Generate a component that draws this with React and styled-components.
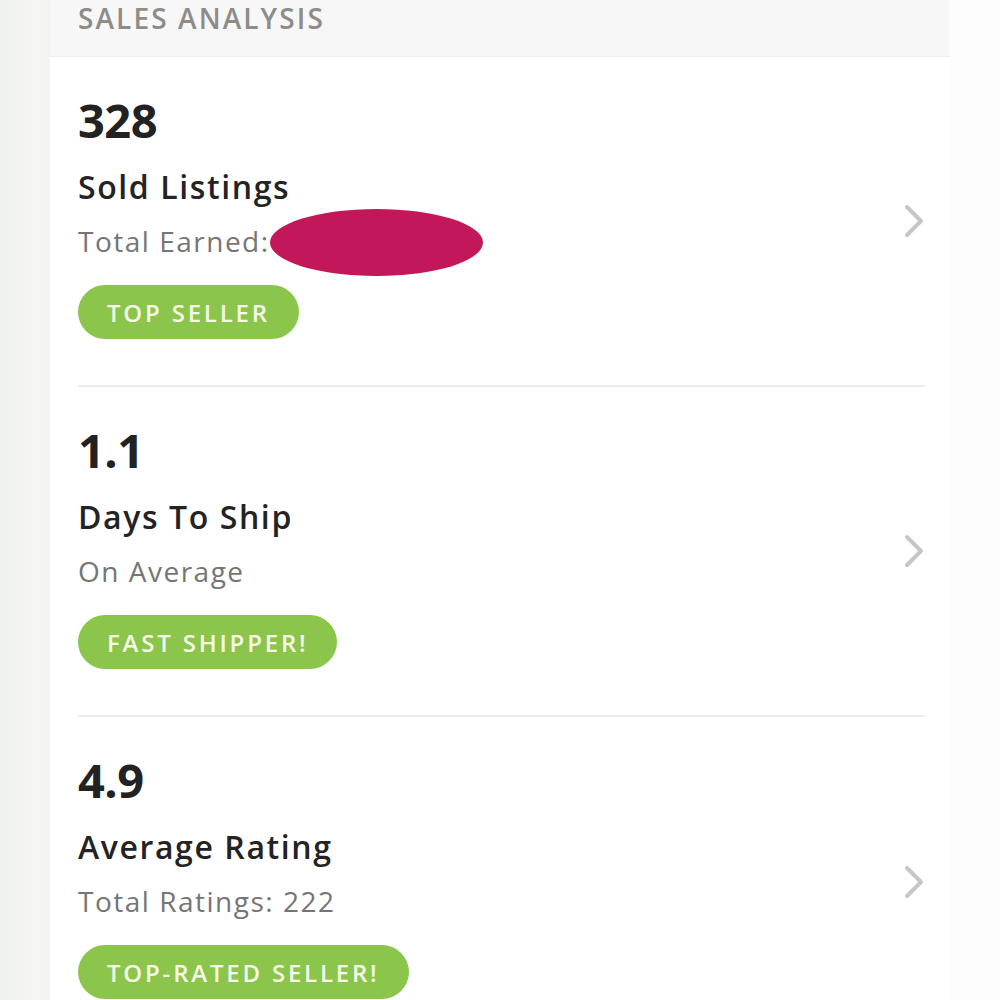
import React from 'react';
import styled, { createGlobalStyle } from 'styled-components';

const GlobalStyle = createGlobalStyle`
  html, body {
    margin: 0;
    padding: 0;
    background: #fdfdfd;
  }
  body {
    font-family: 'Open Sans', 'Noto Sans', 'Liberation Sans', sans-serif;
  }
`;

const stats = [
  {
    value: '328',
    title: 'Sold Listings',
    subtitle: 'Total Earned:',
    redacted: true,
    badge: 'TOP SELLER'
  },
  {
    value: '1.1',
    title: 'Days To Ship',
    subtitle: 'On Average',
    badge: 'FAST SHIPPER!'
  },
  {
    value: '4.9',
    title: 'Average Rating',
    subtitle: 'Total Ratings: 222',
    badge: 'TOP-RATED SELLER!'
  }
];

function Chevron() {
  return (
    <svg width="26" height="34" viewBox="0 0 26 34" fill="none">
      <path
        d="M8 3 L22 17 L8 31"
        stroke="#c6c6c6"
        strokeWidth="4"
        strokeLinecap="round"
        strokeLinejoin="round"
      />
    </svg>
  );
}

export default function App() {
  return (
    <Page>
      <GlobalStyle />
      <LeftGutter />
      <Main>
        <Header>SALES ANALYSIS</Header>
        <List>
          {stats.map((stat, i) => (
            <StatRow key={stat.title} last={i === stats.length - 1}>
              <StatBody>
                <Value>{stat.value}</Value>
                <Title>{stat.title}</Title>
                <Subtitle>
                  {stat.subtitle}
                  {stat.redacted && <Redaction />}
                </Subtitle>
                <Badge>{stat.badge}</Badge>
              </StatBody>
              <ChevronBox>
                <Chevron />
              </ChevronBox>
            </StatRow>
          ))}
        </List>
      </Main>
      <RightGutter />
    </Page>
  );
}

const Page = styled.div`
  display: flex;
  width: 1000px;
  height: 1000px;
  overflow: hidden;
  background: #ffffff;
`;

const LeftGutter = styled.div`
  flex: 0 0 50px;
  background: linear-gradient(to right, #f0f2ee, #f5f6f4 70%, #f3f4f2);
`;

const RightGutter = styled.div`
  flex: 0 0 50px;
  background: #fdfdfd;
`;

const Main = styled.div`
  flex: 0 0 900px;
  display: flex;
  flex-direction: column;
  background: #ffffff;
`;

const Header = styled.div`
  flex: 0 0 57px;
  box-sizing: border-box;
  padding: 0 0 0 28px;
  background: #f8f7f7;
  border-bottom: 1px solid #f1f0f0;
  color: #8e8c88;
  font-size: 28px;
  font-weight: 600;
  letter-spacing: 2.1px;
  line-height: 36px;
`;

const List = styled.div`
  display: flex;
  flex-direction: column;
  padding: 0 25px 0 28px;
`;

const StatRow = styled.div`
  flex: 0 0 330px;
  display: flex;
  box-sizing: border-box;
  padding-top: 38px;
  border-bottom: ${props => (props.last ? 'none' : '2px solid #ececec')};
`;

const StatBody = styled.div`
  flex: 1 1 auto;
  display: flex;
  flex-direction: column;
  align-items: flex-start;
`;

const Value = styled.div`
  font-size: 47px;
  font-weight: 700;
  color: #222222;
  line-height: 50px;
  letter-spacing: -0.5px;
`;

const Title = styled.div`
  margin-top: 23px;
  font-size: 32px;
  font-weight: 600;
  color: #232323;
  line-height: 38px;
  letter-spacing: 1.6px;
`;

const Subtitle = styled.div`
  margin-top: 18px;
  font-size: 28px;
  color: #757575;
  line-height: 34px;
  letter-spacing: 1.5px;
  display: flex;
  align-items: center;
`;

const Redaction = styled.span`
  display: inline-block;
  width: 213px;
  height: 67px;
  margin: -15px 0 -18px 0;
  border-radius: 50%;
  background: #c2185a;
`;

const Badge = styled.div`
  margin-top: 27px;
  height: 54px;
  padding: 0 29px;
  border-radius: 27px;
  background: #8bc54b;
  color: #f6fbe8;
  font-size: 24px;
  font-weight: 600;
  letter-spacing: 2.8px;
  display: flex;
  align-items: center;
`;

const ChevronBox = styled.div`
  flex: 0 0 auto;
  align-self: center;
  display: flex;
  margin-top: -38px;
`;
